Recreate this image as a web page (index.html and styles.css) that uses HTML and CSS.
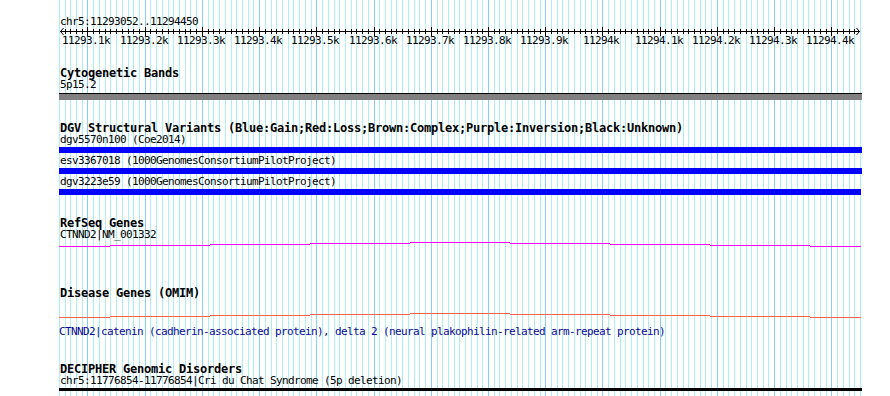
FILE: index.html
```html
<!DOCTYPE html>
<html lang="en">
<head>
<meta charset="utf-8">
<title>Genome browser view chr5:11293052..11294450</title>
<link rel="stylesheet" href="styles.css">
</head>
<body>
<div class="page">
  <svg class="grid-layer" width="890" height="396" viewBox="0 0 890 396" shape-rendering="crispEdges" aria-hidden="true">
    <path class="grid-minor" d="M59.5 0V396M65.5 0V396M70.5 0V396M76.5 0V396M82.5 0V396M93.5 0V396M99.5 0V396M105.5 0V396M110.5 0V396M116.5 0V396M122.5 0V396M128.5 0V396M133.5 0V396M139.5 0V396M150.5 0V396M156.5 0V396M162.5 0V396M168.5 0V396M173.5 0V396M179.5 0V396M185.5 0V396M190.5 0V396M196.5 0V396M208.5 0V396M213.5 0V396M219.5 0V396M225.5 0V396M231.5 0V396M236.5 0V396M242.5 0V396M248.5 0V396M253.5 0V396M265.5 0V396M271.5 0V396M276.5 0V396M282.5 0V396M288.5 0V396M293.5 0V396M299.5 0V396M305.5 0V396M311.5 0V396M322.5 0V396M328.5 0V396M334.5 0V396M339.5 0V396M345.5 0V396M351.5 0V396M356.5 0V396M362.5 0V396M368.5 0V396M379.5 0V396M385.5 0V396M391.5 0V396M396.5 0V396M402.5 0V396M408.5 0V396M414.5 0V396M419.5 0V396M425.5 0V396M437.5 0V396M442.5 0V396M448.5 0V396M454.5 0V396M459.5 0V396M465.5 0V396M471.5 0V396M477.5 0V396M482.5 0V396M494.5 0V396M499.5 0V396M505.5 0V396M511.5 0V396M517.5 0V396M522.5 0V396M528.5 0V396M534.5 0V396M540.5 0V396M551.5 0V396M557.5 0V396M562.5 0V396M568.5 0V396M574.5 0V396M580.5 0V396M585.5 0V396M591.5 0V396M597.5 0V396M608.5 0V396M614.5 0V396M620.5 0V396M625.5 0V396M631.5 0V396M637.5 0V396M643.5 0V396M648.5 0V396M654.5 0V396M665.5 0V396M671.5 0V396M677.5 0V396M683.5 0V396M688.5 0V396M694.5 0V396M700.5 0V396M705.5 0V396M711.5 0V396M723.5 0V396M728.5 0V396M734.5 0V396M740.5 0V396M746.5 0V396M751.5 0V396M757.5 0V396M763.5 0V396M768.5 0V396M780.5 0V396M786.5 0V396M791.5 0V396M797.5 0V396M803.5 0V396M808.5 0V396M814.5 0V396M820.5 0V396M826.5 0V396M837.5 0V396M843.5 0V396M849.5 0V396M854.5 0V396M860.5 0V396"/>
    <path class="grid-major" d="M87.5 0V396M145.5 0V396M202.5 0V396M259.5 0V396M316.5 0V396M374.5 0V396M431.5 0V396M488.5 0V396M545.5 0V396M602.5 0V396M660.5 0V396M717.5 0V396M774.5 0V396M831.5 0V396"/>
  </svg>

  <main class="content">
    <svg class="ruler" width="803" height="50" viewBox="59 0 803 50">
      <text class="ruler-text" x="60" y="25">chr5:11293052..11294450</text>
      <path class="axis" shape-rendering="crispEdges" d="M60 31.5H860"/>
      <path class="axis" shape-rendering="crispEdges" d="M65.5 29v5M70.5 29v5M76.5 29v5M82.5 29v5M93.5 29v5M99.5 29v5M105.5 29v5M110.5 29v5M116.5 29v5M122.5 29v5M128.5 29v5M133.5 29v5M139.5 29v5M150.5 29v5M156.5 29v5M162.5 29v5M168.5 29v5M173.5 29v5M179.5 29v5M185.5 29v5M190.5 29v5M196.5 29v5M208.5 29v5M213.5 29v5M219.5 29v5M225.5 29v5M231.5 29v5M236.5 29v5M242.5 29v5M248.5 29v5M253.5 29v5M265.5 29v5M271.5 29v5M276.5 29v5M282.5 29v5M288.5 29v5M293.5 29v5M299.5 29v5M305.5 29v5M311.5 29v5M322.5 29v5M328.5 29v5M334.5 29v5M339.5 29v5M345.5 29v5M351.5 29v5M356.5 29v5M362.5 29v5M368.5 29v5M379.5 29v5M385.5 29v5M391.5 29v5M396.5 29v5M402.5 29v5M408.5 29v5M414.5 29v5M419.5 29v5M425.5 29v5M437.5 29v5M442.5 29v5M448.5 29v5M454.5 29v5M459.5 29v5M465.5 29v5M471.5 29v5M477.5 29v5M482.5 29v5M494.5 29v5M499.5 29v5M505.5 29v5M511.5 29v5M517.5 29v5M522.5 29v5M528.5 29v5M534.5 29v5M540.5 29v5M551.5 29v5M557.5 29v5M562.5 29v5M568.5 29v5M574.5 29v5M580.5 29v5M585.5 29v5M591.5 29v5M597.5 29v5M608.5 29v5M614.5 29v5M620.5 29v5M625.5 29v5M631.5 29v5M637.5 29v5M643.5 29v5M648.5 29v5M654.5 29v5M665.5 29v5M671.5 29v5M677.5 29v5M683.5 29v5M688.5 29v5M694.5 29v5M700.5 29v5M705.5 29v5M711.5 29v5M723.5 29v5M728.5 29v5M734.5 29v5M740.5 29v5M746.5 29v5M751.5 29v5M757.5 29v5M763.5 29v5M768.5 29v5M780.5 29v5M786.5 29v5M791.5 29v5M797.5 29v5M803.5 29v5M808.5 29v5M814.5 29v5M820.5 29v5M826.5 29v5M837.5 29v5M843.5 29v5M849.5 29v5M854.5 29v5"/>
      <path class="axis" shape-rendering="crispEdges" d="M87.5 27v9M145.5 27v9M202.5 27v9M259.5 27v9M316.5 27v9M374.5 27v9M431.5 27v9M488.5 27v9M545.5 27v9M602.5 27v9M660.5 27v9M717.5 27v9M774.5 27v9M831.5 27v9"/>
      <path class="arrow" d="M63.5 28L60.5 31.5L63.5 35M856.5 28L859.5 31.5L856.5 35"/>
      <text class="ruler-text" x="62" y="44">11293.1k</text>
      <text class="ruler-text" x="120" y="44">11293.2k</text>
      <text class="ruler-text" x="177" y="44">11293.3k</text>
      <text class="ruler-text" x="234" y="44">11293.4k</text>
      <text class="ruler-text" x="291" y="44">11293.5k</text>
      <text class="ruler-text" x="349" y="44">11293.6k</text>
      <text class="ruler-text" x="406" y="44">11293.7k</text>
      <text class="ruler-text" x="463" y="44">11293.8k</text>
      <text class="ruler-text" x="520" y="44">11293.9k</text>
      <text class="ruler-text" x="583" y="44">11294k</text>
      <text class="ruler-text" x="635" y="44">11294.1k</text>
      <text class="ruler-text" x="692" y="44">11294.2k</text>
      <text class="ruler-text" x="749" y="44">11294.3k</text>
      <text class="ruler-text" x="806" y="44">11294.4k</text>
    </svg>

    <section class="track track-cyto">
      <h2 class="title">Cytogenetic Bands</h2>
      <div class="label">5p15.2</div>
      <div class="band"></div>
    </section>

    <section class="track track-dgv">
      <h2 class="title">DGV Structural Variants (Blue:Gain;Red:Loss;Brown:Complex;Purple:Inversion;Black:Unknown)</h2>
      <div class="feature">
        <div class="label">dgv5570n100 (Coe2014)</div>
        <div class="bar bar-blue"></div>
      </div>
      <div class="feature">
        <div class="label">esv3367018 (1000GenomesConsortiumPilotProject)</div>
        <div class="bar bar-blue"></div>
      </div>
      <div class="feature">
        <div class="label">dgv3223e59 (1000GenomesConsortiumPilotProject)</div>
        <div class="bar bar-blue bar-short"></div>
      </div>
    </section>

    <section class="track track-refseq">
      <h2 class="title">RefSeq Genes</h2>
      <div class="label">CTNND2|NM_001332</div>
      <svg class="gene-line" width="803" height="5" viewBox="59 0 803 5" shape-rendering="crispEdges">
        <path class="line-magenta" d="M59 4.5H110M110 3.5H210M210 2.5H310M310 1.5H410M410 0.5H510M510 1.5H610M610 2.5H710M710 3.5H810M810 4.5H861"/>
      </svg>
    </section>

    <section class="track track-omim">
      <h2 class="title">Disease Genes (OMIM)</h2>
      <svg class="gene-line omim-line" width="803" height="5" viewBox="59 0 803 5" shape-rendering="crispEdges">
        <path class="line-tomato" d="M59 4.5H110M110 3.5H210M210 2.5H310M310 1.5H410M410 0.5H510M510 1.5H610M610 2.5H710M710 3.5H810M810 4.5H861"/>
      </svg>
      <div class="label label-link">CTNND2|catenin (cadherin-associated protein), delta 2 (neural plakophilin-related arm-repeat protein)</div>
    </section>

    <section class="track track-decipher">
      <h2 class="title">DECIPHER Genomic Disorders</h2>
      <div class="label">chr5:11776854-11776854|Cri du Chat Syndrome (5p deletion)</div>
      <div class="bar bar-black"></div>
    </section>
  </main>
</div>
</body>
</html>
```

FILE: styles.css
```css
html, body {
  margin: 0;
  padding: 0;
  background: #ffffff;
}

.page {
  display: grid;
  width: 890px;
  height: 396px;
  overflow: hidden;
}

.grid-layer,
.content {
  grid-area: 1 / 1;
}

.grid-layer {
  display: block;
}

.grid-minor {
  stroke: #afeeee;
  stroke-width: 1;
  fill: none;
}

.grid-major {
  stroke: #87cefa;
  stroke-width: 1;
  fill: none;
}

.content {
  display: flex;
  flex-direction: column;
  align-items: flex-start;
  padding-left: 59px;
  width: 803px;
}

.ruler {
  display: block;
  overflow: visible;
}

.ruler-text {
  font-family: "DejaVu Sans Mono", monospace;
  font-size: 11px;
  letter-spacing: -0.623px;
  fill: #000000;
}

.axis {
  stroke: #000000;
  stroke-width: 1;
  fill: none;
}

.arrow {
  stroke: #000000;
  stroke-width: 1;
  fill: none;
}

.track {
  display: flex;
  flex-direction: column;
  align-items: flex-start;
  width: 803px;
}

.title {
  margin: 0;
  padding-left: 1px;
  font-family: "DejaVu Sans Mono", monospace;
  font-weight: bold;
  font-size: 12px;
  line-height: 12px;
  letter-spacing: -0.225px;
  color: #000000;
  white-space: nowrap;
}

.label {
  padding-left: 1px;
  font-family: "DejaVu Sans Mono", monospace;
  font-size: 11px;
  line-height: 12px;
  letter-spacing: -0.623px;
  color: #000000;
  white-space: nowrap;
}

.label-link {
  padding-left: 0;
  color: #0a0a96;
}

.track-cyto {
  margin-top: 17px;
}

.band {
  margin-top: 2px;
  width: 803px;
  height: 6px;
  border-top: 1px solid #000000;
  background: #808080;
}

.track-dgv {
  margin-top: 22px;
}

.feature {
  display: flex;
  flex-direction: column;
  align-items: flex-start;
  width: 803px;
}

.feature + .feature {
  margin-top: 2px;
}

.bar {
  width: 803px;
}

.bar-blue {
  margin-top: 1px;
  height: 6px;
  background: #0000ff;
}

.bar-short {
  width: 802px;
}

.track-refseq {
  margin-top: 22px;
}

.gene-line {
  display: block;
  margin-top: 1px;
}

.line-magenta {
  stroke: #ff00ff;
  stroke-width: 1;
  fill: none;
}

.line-tomato {
  stroke: #ff6347;
  stroke-width: 1;
  fill: none;
}

.track-omim {
  margin-top: 40px;
}

.omim-line {
  margin-top: 14px;
  margin-bottom: 8px;
}

.track-decipher {
  margin-top: 25px;
}

.bar-black {
  margin-top: 1px;
  height: 3px;
  background: #000000;
}
```
